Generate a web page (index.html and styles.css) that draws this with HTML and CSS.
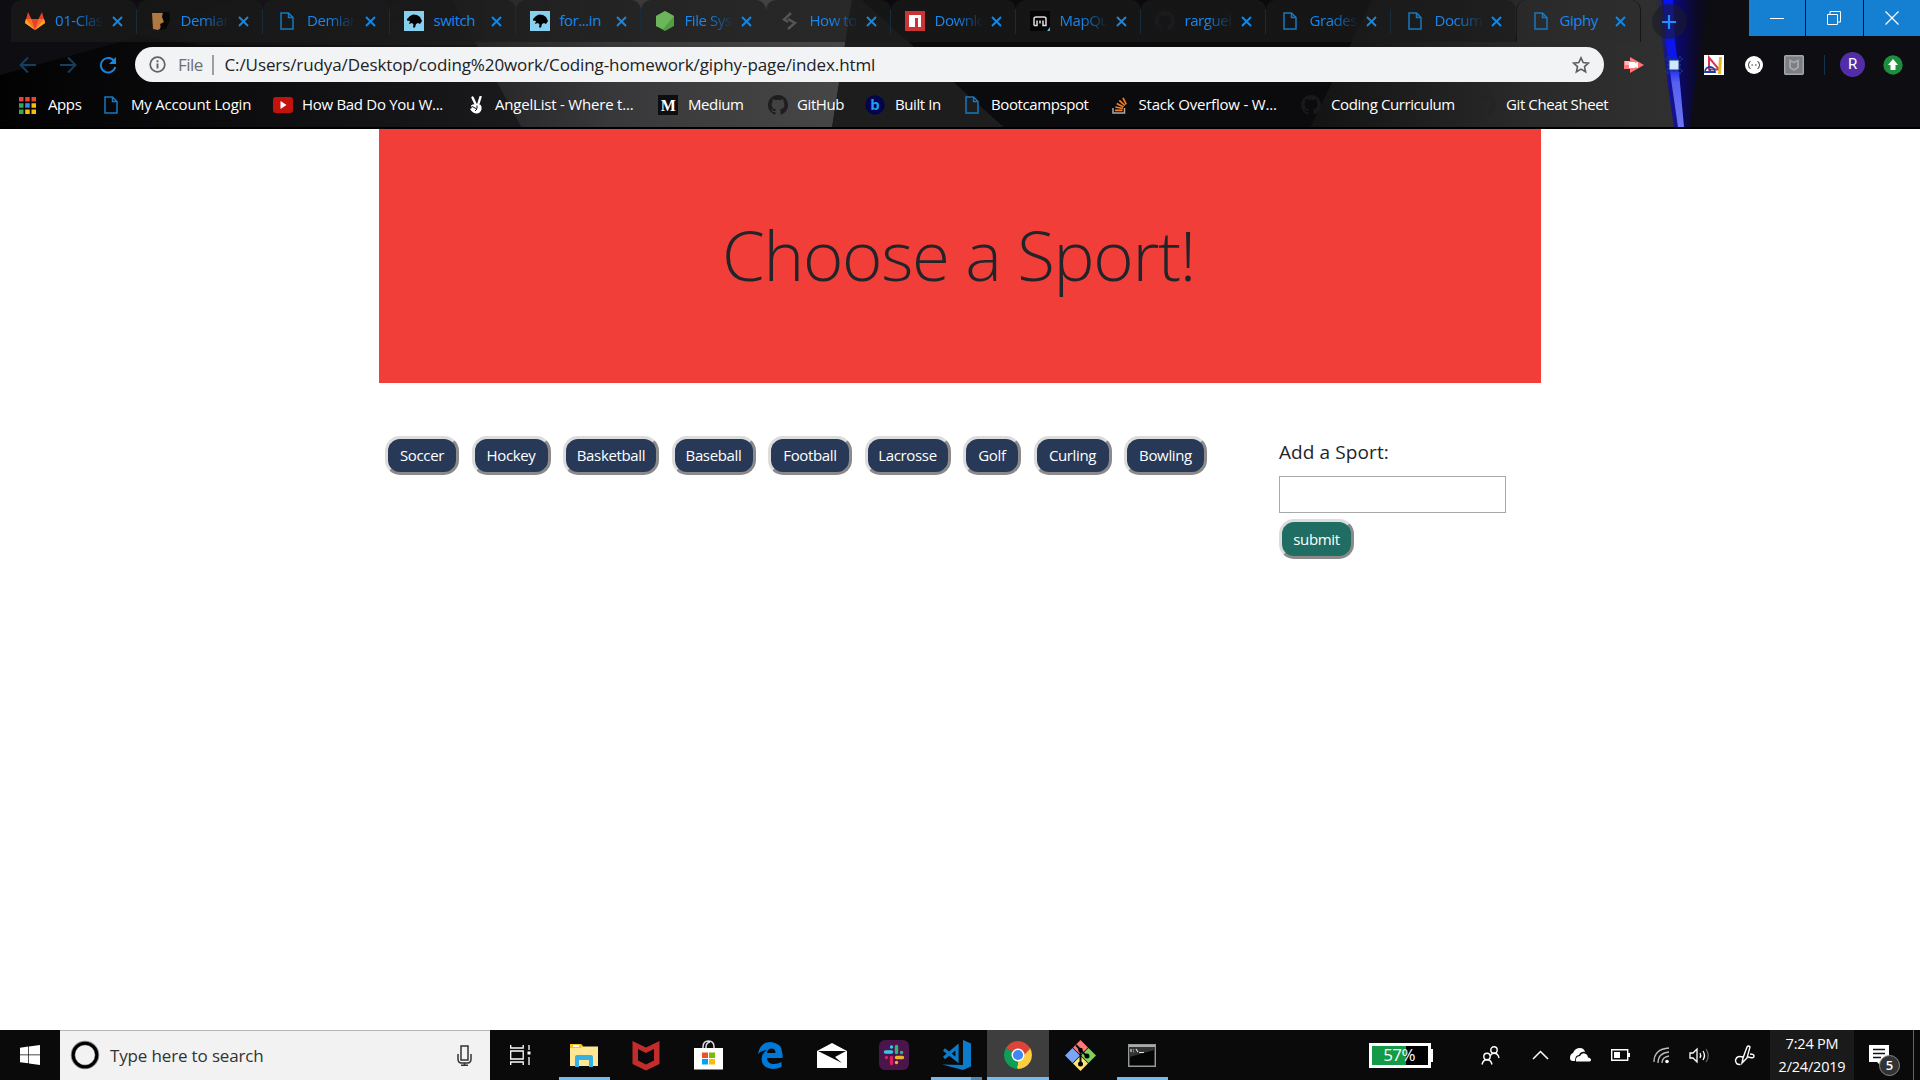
FILE: index.html
```html
<!DOCTYPE html>
<html lang="en">
<head>
<meta charset="utf-8">
<title>Giphy</title>
<link rel="stylesheet" href="styles.css">
</head>
<body>
<svg class="defs" width="0" height="0">
  <symbol id="doc" viewBox="0 0 14 18"><path d="M1 1h7.5L13 5.500V17H1zM8.500 1v4.500H13" fill="none" stroke="#1778c0" stroke-width="1.500"/></symbol>
  <symbol id="close" viewBox="0 0 11 11"><path d="M1 1l9 9M10 1l-9 9" stroke="#1787e0" stroke-width="1.900"/></symbol>
  <symbol id="github" viewBox="0 0 16 16"><path d="M8 0C3.580 0 0 3.580 0 8c0 3.540 2.290 6.530 5.470 7.590.4.070.55-.17.55-.38v-1.490c-2.230.48-2.690-.95-2.690-.95-.36-.92-.89-1.170-.89-1.170-.73-.5.050-.49.050-.49.8.060 1.230.83 1.230.83.72 1.220 1.870.87 2.330.67.070-.52.280-.87.510-1.070-1.780-.2-3.640-.89-3.640-3.950 0-.87.310-1.590.820-2.150-.08-.2-.36-1.020.080-2.120 0 0 .67-.21 2.200.820a7.600 7.600 0 0 1 4 0c1.530-1.040 2.200-.82 2.200-.82.44 1.100.16 1.920.080 2.120.51.560.82 1.270.82 2.150 0 3.070-1.870 3.750-3.650 3.950.290.250.540.730.540 1.480v2.190c0 .21.150.46.550.38A8 8 0 0 0 8 0z"/></symbol>
  <symbol id="mdn" viewBox="0 0 20 20"><path fill="#87cfee" d="M0 0h20v20H0z"/><path d="M3 8l3-3 3-1.500 4 .5 3 2 2 4-2 3-2-1-2 1-1 3.500H9l.500-3L8 12l-3 1 1-3-3-.500z"/></symbol>
</svg>

<header class="browser">
  <svg class="theme" width="1920" height="128" viewBox="0 0 1920 128">
    <defs>
      <linearGradient id="wedge" x1="0" x2="1"><stop offset="0" stop-color="#222224"/><stop offset=".4" stop-color="#38383a"/><stop offset="1" stop-color="#474747"/></linearGradient>
      <linearGradient id="right" x1="0" x2="1"><stop offset="0" stop-color="#131314"/><stop offset=".6" stop-color="#2a2a2a"/><stop offset="1" stop-color="#303030"/></linearGradient>
      <linearGradient id="glow" x1="0" x2="1"><stop offset="0" stop-color="#0a08b8" stop-opacity="0"/><stop offset=".25" stop-color="#0a08b8" stop-opacity=".8"/><stop offset=".5" stop-color="#0803a0" stop-opacity=".5"/><stop offset="1" stop-color="#050230" stop-opacity="0"/></linearGradient>
      <linearGradient id="beam" x1="0" x2="0" y1="0" y2="1"><stop offset="0" stop-color="#0712f5"/><stop offset=".5" stop-color="#0c18e8"/><stop offset=".65" stop-color="#5560f0"/><stop offset="1" stop-color="#6c75f5"/></linearGradient>
      <linearGradient id="left" x1="0" x2="1" y1="0" y2="0"><stop offset="0" stop-color="#020203"/><stop offset="1" stop-color="#1b1a1d"/></linearGradient>
      <linearGradient id="band" x1="0" x2="1" y1="0" y2="0"><stop offset="0" stop-color="#121115"/><stop offset="1" stop-color="#232325"/></linearGradient>
    </defs>
    <path fill="#0e0d11" d="M0 0h1920v128H0z"/>
    <path fill="url(#left)" d="M0 75L200 20H540v108H0z"/>
    <path fill="url(#band)" d="M130 34L240 0h240l12 45H200z" opacity=".6"/>
    <path fill="url(#wedge)" d="M452 0h400l-20 128H522z"/>
    <path fill="#1d1d1e" d="M852 0h10l143 128H832z"/>
    <path fill="#0b0a0d" d="M862 0h510l-62 128H1005z"/>
    <path fill="url(#right)" d="M1372 0h290l18 128H1310z"/>
    <path fill="url(#glow)" d="M1656 0h55l-12 60-10 68h-15z"/>
    <path fill="url(#beam)" d="M1663 0h10l2 42 4 30 5 55h-6l-8-55-4-30z"/>
    <path fill="#000" d="M0 127h1920v1H0z"/>
  </svg>

  <div class="tabstrip">
    <div class="tabs">
      <div class="tab"><svg class="fav" viewBox="0 0 20 20"><path fill="#e24329" d="M10 19L0 12 3 1l3.500 7h7L17 1l3 11z"/><path fill="#fc6d26" d="M10 19L0 12l1-4h5.500L10 19l3.500-11H19l1 4z"/><path fill="#fca326" d="M10 19L0 12l1-4zM10 19l10-7-1-4z"/></svg><span class="label">01-Class</span><svg class="x"><use href="#close"/></svg></div>
      <div class="tab"><svg class="fav" viewBox="0 0 20 20"><path fill="#b0793f" d="M1 2h13l-2 4 1 5-4 2 1 4-3 2-5-1z"/><path fill="#080808" d="M12 1h6l1 8-4 9-6 1 1-5 3-3-2-5z"/></svg><span class="label">Demian</span><svg class="x"><use href="#close"/></svg></div>
      <div class="tab"><svg class="fav"><use href="#doc"/></svg><span class="label">Demian</span><svg class="x"><use href="#close"/></svg></div>
      <div class="tab"><svg class="fav"><use href="#mdn"/></svg><span class="label whole">switch</span><svg class="x"><use href="#close"/></svg></div>
      <div class="tab"><svg class="fav"><use href="#mdn"/></svg><span class="label whole">for...in</span><svg class="x"><use href="#close"/></svg></div>
      <div class="tab"><svg class="fav" viewBox="0 0 20 20"><path fill="#539e43" d="M10 0l9 5v10l-9 5-9-5V5z"/><path fill="#7fc56a" d="M10 0l9 5-11 13-7-3V5z" opacity=".6"/></svg><span class="label">File Sys</span><svg class="x"><use href="#close"/></svg></div>
      <div class="tab"><svg class="fav" viewBox="0 0 20 20"><path fill="none" stroke="#555" stroke-width="2.400" d="M11 2L4 8.500l4 2.500M8 8l7 4-7 6"/></svg><span class="label">How to</span><svg class="x"><use href="#close"/></svg></div>
      <div class="tab"><svg class="fav" viewBox="0 0 20 20"><path fill="#cb3335" d="M0 0h20v20H0z"/><path fill="#fff" d="M4 4h12v12h-3V7h-3v9H4z"/></svg><span class="label">Downlo</span><svg class="x"><use href="#close"/></svg></div>
      <div class="tab"><svg class="fav" viewBox="0 0 20 20"><path fill="#050505" d="M0 0h20v20H0z"/><path fill="none" stroke="#ddd" stroke-width="1.500" d="M4 14.500V8q0-2 2-2h8q2 0 2 2v6.500h-3V9.500M7 9.500v5H4M10 9.500v3"/><path fill="#4bc3d8" d="M20 16v4h-3z"/></svg><span class="label">MapQu</span><svg class="x"><use href="#close"/></svg></div>
      <div class="tab"><svg class="fav" fill="#1c1a1e"><use href="#github"/></svg><span class="label">rarguel</span><svg class="x"><use href="#close"/></svg></div>
      <div class="tab"><svg class="fav"><use href="#doc"/></svg><span class="label">Grades</span><svg class="x"><use href="#close"/></svg></div>
      <div class="tab"><svg class="fav"><use href="#doc"/></svg><span class="label">Docum</span><svg class="x"><use href="#close"/></svg></div>
      <div class="tab active"><svg class="fav"><use href="#doc"/></svg><span class="label whole">Giphy</span><svg class="x"><use href="#close"/></svg></div>
    </div>
    <div class="newtab"><svg width="16" height="16" viewBox="0 0 16 16"><path d="M8 1v14M1 8h14" stroke="#1c90ff" stroke-width="2.200"/></svg></div>
    <div class="winctl">
      <span><svg width="14" height="14"><path d="M0 7.500h14" stroke="#fff"/></svg></span>
      <span><svg width="14" height="14" fill="none" stroke="#fff"><path d="M.5 3.500h10v10H.5zM3 3V.5h10.500V11H11"/></svg></span>
      <span><svg width="14" height="14"><path d="M.5.5l13 13M13.500.5l-13 13" stroke="#fff" stroke-width="1.200"/></svg></span>
    </div>
  </div>

  <div class="toolbar">
    <div class="nav">
      <svg viewBox="0 0 18 18" stroke="#153f60"><path d="M17 9H2M9 1.500L1.500 9 9 16.500"/></svg>
      <svg viewBox="0 0 18 18" stroke="#153f60"><path d="M1 9h15M9 1.500L16.500 9 9 16.500"/></svg>
      <svg viewBox="0 0 18 18" stroke="#1787e0"><path d="M15.500 5.500A7.300 7.300 0 1 0 16.300 11"/><path d="M17 1v7h-7z" fill="#1787e0" stroke="none"/></svg>
    </div>
    <div class="omnibox">
      <svg class="info" viewBox="0 0 17 17"><circle cx="8.500" cy="8.500" r="7.300" fill="none" stroke="#5f6368" stroke-width="1.700"/><path d="M8.500 7.500v5M8.500 4.300v1.900" stroke="#5f6368" stroke-width="1.900"/></svg>
      <span class="scheme">File</span><i></i>
      <span class="url">C:/Users/rudya/Desktop/coding%20work/Coding-homework/giphy-page/index.html</span>
      <svg class="star" viewBox="0 0 18 18"><path d="M9 1.800l2.200 4.800 5.200.5-3.900 3.500 1.100 5.200L9 13.100l-4.600 2.700 1.100-5.200L1.600 7.100l5.200-.5z" fill="none" stroke="#5a5e63" stroke-width="1.600"/></svg>
    </div>
    <div class="exts">
      <svg viewBox="0 0 20 20"><path fill="#f77" d="M0 6h6V2l14 8-14 8v-4H0z"/><path fill="#fff" d="M5 7h6v1l3-1v6l-3-1v1H5z"/><path fill="#fbb" d="M1 6h4v4H1z"/></svg>
      <svg viewBox="0 0 20 20"><path fill="none" stroke="#173b70" stroke-width="1.500" stroke-dasharray="2 2" d="M1 4h18M1 16h18M4 1v18M16 1v18"/><path fill="#d3e5ff" stroke="#123a80" d="M5 5h10v10H5z"/></svg>
      <svg viewBox="0 0 20 20"><path fill="#fff" d="M0 0h20v20H0z"/><path fill="none" stroke="#d43850" stroke-width="2" d="M5 2.500v12h10z"/><path stroke="#e5b62a" stroke-width="3" d="M16.500 2l-1 17"/><path fill="none" stroke="#1740a0" stroke-width="1.800" d="M1 17a5 5 0 0 1 10 0zM6 14v3"/></svg>
      <svg viewBox="0 0 20 20"><circle cx="10" cy="10" r="9" fill="#fff"/><path fill="none" stroke="#333" d="M6.500 6.500q-1.500 0-1.500 1.500t-1 2q1 .5 1 2t1.500 1.500M13.500 6.500q1.500 0 1.500 1.500t1 2q-1 .5-1 2t-1.500 1.500M7.500 10h1.500M11 10h1.500"/></svg>
      <svg viewBox="0 0 20 20"><rect x=".7" y=".7" width="18.600" height="18.600" rx="1" fill="#7b7f83" stroke="#a4a7aa" stroke-width="1.400"/><path fill="none" stroke="#a5a8aa" stroke-width="1.900" d="M6 5.500l4 2 4-2v7l-4 2.500-4-2.500z"/></svg>
      <i></i>
      <b>R</b>
      <svg viewBox="0 0 20 20"><circle cx="10" cy="10" r="9.700" fill="#1e8e3e"/><path fill="#fff" d="M10 4l5 6h-2.500v5h-5v-5H5z"/></svg>
    </div>
  </div>

  <nav class="bookmarks">
    <a class="b1"><svg viewBox="0 0 17 17"><path fill="#ea4335" d="M0 0h4.500v4.500H0zM6.200 0h4.500v4.500H6.200zM12.500 0H17v4.500h-4.500z"/><path fill="#34a853" d="M0 6.200h4.500v4.500H0zM0 12.500h4.500V17H0z"/><path fill="#4285f4" d="M6.200 6.200h4.500v4.500H6.200z"/><path fill="#fbbc05" d="M12.500 6.200H17v4.500h-4.500zM6.200 12.500h4.500V17H6.200zM12.500 12.500H17V17h-4.500z"/></svg><span>Apps</span></a>
    <a class="b2"><svg><use href="#doc"/></svg><span>My Account Login</span></a>
    <a class="b3"><svg viewBox="0 0 20 16"><rect width="20" height="16" rx="3" fill="#c4120c"/><path fill="#fff" d="M7.500 4l6 4-6 4z"/></svg><span>How Bad Do You W...</span></a>
    <a class="b4"><svg viewBox="0 0 14 18"><path d="M3.500 1.500L7 9M11.500 1L9 9" stroke="#fff" stroke-width="2.400" stroke-linecap="round"/><path fill="#fff" d="M2 9.500Q5 7.500 7 9l4-.5q2 1 1.500 5Q11 18 7 17.500 3.500 17 1 13l2-1z"/><path d="M3 10.500l5 2.500-2 2M8 9.500v3" fill="none" stroke="#111"/></svg><span>AngelList - Where t...</span></a>
    <a class="b5"><svg viewBox="0 0 20 20"><path fill="#0e0e0e" d="M0 0h20v20H0z"/><text x="10" y="15.500" text-anchor="middle" class="serif-m">M</text></svg><span>Medium</span></a>
    <a class="b6"><svg fill="#1f1d20"><use href="#github"/></svg><span>GitHub</span></a>
    <a class="b7"><svg viewBox="0 0 20 20"><circle cx="10" cy="10" r="9.700" fill="#03034e"/><text x="10" y="15.300" text-anchor="middle" class="sans-b">b</text></svg><span>Built In</span></a>
    <a class="b8"><svg><use href="#doc"/></svg><span>Bootcampspot</span></a>
    <a class="b9"><svg viewBox="0 0 15 17"><path fill="none" stroke="#aaa" stroke-width="1.500" d="M1 11v5h11.500v-5"/><path stroke="#f48024" stroke-width="1.700" d="M3 13.300h7.500M3.300 10l7.500 1.500M4.700 6.500l6.800 3.400M7.300 3.300l5.500 5.200M11 .8l3.200 6.500"/></svg><span>Stack Overflow - W...</span></a>
    <a class="b10"><svg fill="#1a181b"><use href="#github"/></svg><span>Coding Curriculum</span></a>
    <a class="b11"><svg fill="#252324"><use href="#github"/></svg><span>Git Cheat Sheet</span></a>
  </nav>
</header>

<main class="page">
  <section class="hero"><h1>Choose a Sport!</h1></section>
  <section class="content">
    <div class="sports">
      <button class="w74">Soccer</button><button class="w79">Hockey</button><button class="w96">Basketball</button><button class="w84">Baseball</button><button class="w84">Football</button><button class="w86">Lacrosse</button><button class="w58">Golf</button><button class="w78">Curling</button><button class="w83">Bowling</button>
    </div>
    <form class="add">
      <label for="sport">Add a Sport:</label>
      <input id="sport" type="text">
      <button type="button" class="submit">submit</button>
    </form>
  </section>
</main>

<footer class="taskbar">
  <div class="start"><svg width="20" height="20" viewBox="0 0 20 20" fill="#fff"><path d="M0 2.800L8.300 1.600v8H0zM9 1.500L20 0v9.600H9zM0 10.300h8.300v8L0 17.200zM9 10.300h11V20L9 18.500z"/></svg></div>
  <div class="search">
    <svg width="30" height="30" viewBox="0 0 30 30"><circle cx="15" cy="15" r="12" fill="none" stroke="#888" stroke-width="4.500"/><circle cx="15" cy="15" r="11.800" fill="none" stroke="#000" stroke-width="3"/></svg>
    <span>Type here to search</span>
    <svg class="mic" width="15" height="21" viewBox="0 0 15 21" fill="none" stroke="#333" stroke-width="1.500"><path d="M4 1h7v14H4zM1 9v5q0 4 3.500 4h6q3.500 0 3.500-4V9M7.500 18v2M4 20.200h7"/></svg>
  </div>
  <div class="apps">
    <div class="app taskview"><svg width="21" height="20" viewBox="0 0 21 20" fill="none" stroke="#fff" stroke-width="1.300"><path d="M.7 0v3h12.500V0M.7 6h12.500v8H.7zM.7 20v-3h12.500v3M19 0v5M19 12v8"/><path d="M17.500 6.500h3v3h-3z" fill="#fff" stroke="none"/></svg></div>
    <div class="app open"><svg width="28" height="24" viewBox="0 0 28 24"><path fill="#f8c31c" d="M0 1h11l2 3H0z"/><path fill="#ffe793" d="M0 3.500h28V23H0z"/><path fill="#f8c31c" d="M0 1h11l2 2-2 2H0z"/><path fill="#fff" d="M3 2h6v2H3z"/><path fill="#36b1e3" d="M5 14q0-2 2-2h14q2 0 2 2v10h-4v-7H9v7H5z"/></svg></div>
    <div class="app"><svg width="28" height="31" viewBox="0 0 28 31"><path fill="#c22d2c" fill-rule="evenodd" d="M.5 1L14 7.500 27.500 1v23L14 30.500.5 24zM6 9v11.500l8 4 8-4V9l-8 4z"/></svg></div>
    <div class="app"><svg width="29" height="30" viewBox="0 0 29 30"><path fill="none" stroke="#ddd" stroke-width="1.500" d="M9 9V7q0-6 5.500-6T20 7v2M12 9V7q0-4 4-5"/><path fill="#fff" d="M0 8h29v21.500H0z"/><path fill="#f25022" d="M8 12.500h6v5.500H8z"/><path fill="#7fba00" d="M15 12.500h6v5.500h-6z"/><path fill="#00a4ef" d="M8 19h6v5.500H8z"/><path fill="#ffb900" d="M15 19h6v5.500h-6z"/></svg></div>
    <div class="app"><svg width="25" height="27" viewBox="0 0 25 27"><path fill="#0078d7" d="M0 12Q2 0 13 0q11 1 11.500 12v4H9q.5 6 7 6 4 0 7.500-2v5q-4 2-9 2Q4 26 3.500 17q0-6 5.500-9Q3 8.500 0 12zM9 11h8.500q0-4.500-4-4.500T9 11z"/></svg></div>
    <div class="app"><svg width="30" height="25" viewBox="0 0 30 25"><path fill="#fff" d="M0 8L15 0l15 8v17H0z"/><path fill="#0a0a0a" d="M1 8h28L18 14l7 6z"/></svg></div>
    <div class="app"><svg width="30" height="30" viewBox="0 0 30 30"><rect width="30" height="30" rx="6" fill="#4a154b"/><g stroke-width="3.400" stroke-linecap="round"><path stroke="#36c5f0" d="M12.500 7v.1M12.500 12H6.500"/><path stroke="#2eb67d" d="M17.500 6.500v6M22.500 12.500h.1"/><path stroke="#ecb22e" d="M17.500 17.500h6M17.500 22.500v.1"/><path stroke="#e01e5a" d="M12.500 17.500v6M7.500 17.500h-.1"/></g></svg></div>
    <div class="app multi"><svg width="29" height="30" viewBox="0 0 29 30"><path fill="#0b7ccb" d="M21 0l8 3.500v23L21 30 0 24.500l21 .5z"/><path fill="none" stroke="#0b7ccb" stroke-width="3.200" d="M2 9.500L15 20V7L2 18"/></svg></div>
    <div class="app open current"><svg width="28" height="28" viewBox="0 0 28 28"><path fill="#db4437" d="M14 14L1.900 7a14 14 0 0 1 24.200 0z"/><path fill="#0f9d58" d="M14 14L14 28A14 14 0 0 1 1.900 7z"/><path fill="#ffcd40" d="M14 14L26.100 7A14 14 0 0 1 14 28z"/><path fill="#db4437" d="M14 7.500h12.500L20 14z"/><path fill="#0f9d58" d="M2 7l6.500 11 6 3-3.500 6.500z"/><path fill="#ffcd40" d="M20 13l-6 15-1-2 4-8z"/><circle cx="14" cy="14" r="6.500" fill="#fff"/><circle cx="14" cy="14" r="5.100" fill="#4285f4"/></svg></div>
    <div class="app"><svg width="31" height="31" viewBox="0 0 31 31"><path fill="#f77" d="M15.500 0l7.500 7.500-7.500 7.500L8 7.500z"/><path fill="#7aa7f5" d="M7.500 8l7.500 7.500L7.500 23 0 15.500z"/><path fill="#80d25b" d="M23.500 8l7.500 7.500-7.500 7.500-7.500-7.500z"/><path fill="#ffe47a" d="M15.500 16l7.500 7.500-7.500 7.500L8 23.500z"/><path fill="none" stroke="#111" stroke-width="2" d="M11 5l4.500 5v14M15.500 10l6 6"/><circle cx="15.500" cy="10" r="2.300"/><circle cx="15.500" cy="24" r="2.500"/><circle cx="22" cy="16" r="2.500"/></svg></div>
    <div class="app open"><svg width="28" height="23" viewBox="0 0 28 23"><path fill="#050505" stroke="#929a9e" stroke-width="1.500" d="M.7.700h26.600v21.600H.7z"/><path fill="#aaa" d="M1 1h26v2H1z"/><path fill="#333" d="M1.500 3h25v3L1.500 13z"/><path stroke="#ddd" stroke-width="1.200" d="M3 5v3M5.500 5.500v.8M5.500 7.500v.8M8 5l2 3M11 8.500h5"/></svg></div>
  </div>
  <div class="tray">
    <div class="battery"><span>57%</span></div>
    <svg class="people" width="19" height="19" viewBox="0 0 19 19" fill="none" stroke="#fff" stroke-width="1.400"><circle cx="13" cy="4" r="3.200"/><path d="M9 10q1.500-2.700 4-2.700 4 0 5 4.700"/><circle cx="6" cy="10.500" r="3.200"/><path d="M1 18.500q1-4.800 5-4.800t5 4.800"/></svg>
    <svg class="chev" width="17" height="10" viewBox="0 0 17 10" fill="none" stroke="#fff" stroke-width="1.500"><path d="M1 9l7.500-7.500L16 9"/></svg>
    <svg class="cloud" width="21" height="14" viewBox="0 0 21 14" fill="#fff"><path d="M0 10Q0 6 3 5 5 0 10 0q4 0 5 4-4-1-6 3-4 0-4 6H3q-3 0-3-3z"/><path d="M6 13.500q-1-5 4-5.500 2-4 6-2 2 1 2 3.500 3 .5 3 2.500 0 1.500-2 1.500z"/></svg>
    <svg class="batt" width="19" height="12" viewBox="0 0 19 12"><path d="M.7.700h16v10.600H.7z" fill="none" stroke="#fff" stroke-width="1.400"/><path d="M3 3h6v6H3zM17 4h2v4h-2z" fill="#fff"/></svg>
    <svg class="wifi" width="17" height="18" viewBox="0 0 17 18" fill="none" stroke="#bbb" stroke-width="1.300"><path d="M1 16Q1 3 16 2M5 17Q5 7 16 6M9 17q0-6 7-7"/><circle cx="14" cy="15.500" r="1.800" fill="#fff" stroke="none"/></svg>
    <svg class="vol" width="21" height="17" viewBox="0 0 21 17" fill="none" stroke="#fff" stroke-width="1.300"><path d="M1 6h3l4-4v13l-4-4H1zM11 6q1.500 2.500 0 5M14 4q3 4.500 0 9"/><path stroke="#666" d="M17 2q4.500 6.500 0 13"/></svg>
    <svg class="pen" width="21" height="21" viewBox="0 0 21 21" fill="none" stroke="#fff" stroke-width="1.400"><path d="M8 18l1-5 4-11q1.500-2 3 0l-3 11zM9 12Q3 10 1.500 15q0 5 5 4.500M14 12q6 2 6-1 0-2-4-2"/></svg>
    <div class="clock"><span>7:24 PM</span><span>2/24/2019</span></div>
    <div class="notif"><svg width="20" height="21" viewBox="0 0 20 21"><path fill="#fff" d="M0 0h20v17h-8v4l-4-4H0z"/><path stroke="#111" stroke-width="1.400" d="M4 4.500h12M4 8.500h12M4 12.500h8"/></svg><b>5</b></div>
  </div>
</footer>
</body>
</html>
```
FILE: styles.css
```css
* { box-sizing: border-box; }
body {
  margin: 0;
  width: 1920px;
  height: 1080px;
  overflow: hidden;
  display: flex;
  flex-direction: column;
  background: #fff;
  font-family: "Open Sans", "Noto Sans", sans-serif;
  color: #212529;
}
svg { display: block; flex: none; }
.defs { position: absolute; }

/* browser frame */
.browser { position: relative; height: 129px; flex: none; display: flex; flex-direction: column; background: #000; isolation: isolate; }
.theme { position: absolute; top: 0; left: 0; z-index: -1; }
.tabstrip { display: flex; height: 42px; padding-left: 11px; }
.tabs { display: grid; grid-template-columns: 125.500px 126.500px 126.500px 126px repeat(9, 125px); height: 42px; }
.tab {
  display: flex;
  align-items: center;
  padding: 0 14px;
  border-radius: 10px 10px 0 0;
  background: linear-gradient(90deg, #1b1b1bb0, #1b1b1bb0) 0 0 no-repeat, linear-gradient(#12507f, #12507f) 100% 9px / 1px 25px no-repeat;
}
.tab.active { background: #2d2d2d40; border-left: 1px solid #161616; border-right: 1px solid #161616; }
.fav { width: 20px; height: 20px; }
.tab:nth-child(3) .fav, .tab:nth-child(n+11) .fav { height: 18px; }
.label {
  width: 47px;
  height: 42px;
  line-height: 40px;
  margin-left: 10px;
  white-space: nowrap;
  font-size: 15px;
  letter-spacing: -.45px;
  color: #1787f0;
  -webkit-mask-image: linear-gradient(90deg, #000 45%, #0001);
}
.label.whole { -webkit-mask-image: none; }
.tab.active .label { margin-left: 9px; }
.x { width: 11px; height: 11px; margin-left: auto; }
.newtab { width: 35px; height: 35px; margin: 4px 0 0 11px; border-radius: 50%; background: #1a1a2499; display: flex; align-items: center; justify-content: center; }
.winctl { display: flex; gap: 1px; margin-left: auto; height: 36px; }
.winctl span { width: 56.500px; background: #1580d2; display: flex; align-items: center; justify-content: center; }

.toolbar { display: flex; align-items: center; height: 45px; }
.nav { display: flex; width: 135px; padding-left: 19px; gap: 22px; }
.nav svg { width: 18px; height: 18px; fill: none; stroke-width: 1.900; }
.omnibox { display: flex; align-items: center; width: 1469px; height: 35px; padding: 0 14px; border-radius: 18px; background: #f1f3f4; font-size: 17px; line-height: 33px; }
.info { width: 17px; height: 17px; }
.scheme { width: 34px; margin-left: 12px; color: #6a6e73; letter-spacing: -.5px; }
.omnibox i { width: 1.500px; height: 20px; background: #9aa0a6; }
.url { margin-left: 11px; letter-spacing: -.1px; white-space: nowrap; color: #202124; }
.star { width: 18px; height: 18px; margin-left: auto; }
.exts { display: flex; align-items: center; gap: 20px; margin-left: 20px; }
.exts svg { width: 20px; height: 20px; }
.exts i { width: 1px; height: 20px; background: #12324d; }
.exts b { width: 25px; height: 25px; margin: 0 -2px 0 -5px; border-radius: 50%; background: #512da8; color: #fff; font: 15px/25px Roboto, sans-serif; text-align: center; }

.bookmarks { display: grid; grid-template-columns: 85px 169px 196px 189px 110px 97px 100px 147px 189px 175px auto; height: 36px; padding-left: 19px; color: #fff; font-size: 15px; letter-spacing: -.4px; white-space: nowrap; }
.bookmarks a { display: flex; align-items: center; gap: 10px; }
.bookmarks span { padding-bottom: 2px; }
.bookmarks .b2 { letter-spacing: -.2px; }
.bookmarks .b3 { letter-spacing: -.3px; }
.bookmarks .b4 { letter-spacing: -.2px; }
.bookmarks .b9 { letter-spacing: -.2px; }
.bookmarks svg { width: 20px; height: 20px; }
.bookmarks .b1 svg { width: 17px; height: 17px; margin-right: 2px; }
.bookmarks .b2 svg, .bookmarks .b8 svg { width: 14px; height: 18px; margin-right: 3px; }
.bookmarks .b8 svg { margin-right: 2px; }
.bookmarks .b3 svg { height: 16px; margin-right: -1px; }
.bookmarks .b4 svg { width: 14px; height: 18px; margin-right: 2px; }
.bookmarks .b6 svg { margin-right: -1px; }
.bookmarks .b9 svg { width: 15px; height: 17px; margin-right: 1.500px; }
.serif-m { font: bold 16px "Liberation Serif", serif; fill: #fff; }
.sans-b { font: bold 15px "Open Sans", sans-serif; fill: #1f9cf0; letter-spacing: 0; }

/* page */
.page { flex: 1; display: flex; flex-direction: column; align-items: center; }
.hero { width: 1162px; height: 254px; display: flex; align-items: center; justify-content: center; padding: 0 3px 5px 0; background: #f23e38; }
h1 { margin: 0; font-size: 69px; font-weight: 300; line-height: 84px; letter-spacing: -1.300px; white-space: nowrap; }
.content { width: 1162px; display: flex; justify-content: space-between; padding: 53px 35px 0 6px; }
.sports { display: flex; gap: 12.500px; }
button {
  height: 39px;
  padding: 0 0 2px;
  border: 3px solid;
  border-color: #dcdcdc #8b8989 #8b8989 #dcdcdc;
  border-radius: 15px;
  background: #283958;
  color: #fff;
  font: 15px "Open Sans", sans-serif;
  letter-spacing: -.35px;
}
.w74 { width: 74px; } .w79 { width: 79px; } .w96 { width: 96px; } .w84 { width: 84px; } .w86 { width: 86px; }
.w58 { width: 58px; } .w78 { width: 78px; } .w83 { width: 83px; }
.add { display: flex; flex-direction: column; align-items: flex-start; width: 227px; }
.add label { height: 40px; line-height: 32px; font-size: 19px; letter-spacing: .1px; }
.add input { width: 227px; height: 37px; border: 1px solid #a9a9a9; background: #fff; }
.submit { width: 75px; height: 40px; margin-top: 6px; padding-bottom: 0; background: #206e63; }

/* taskbar */
.taskbar { display: flex; height: 50px; flex: none; background: #0a0a0a; color: #fff; }
.start { width: 60px; display: flex; align-items: center; justify-content: center; }
.search { width: 430px; display: flex; align-items: center; padding: 0 18px 0 10px; gap: 10px; background: #f2f2f2; border-top: 1px solid #b5b5b5; color: #333; font-size: 17px; letter-spacing: -.15px; }
.search svg { margin-bottom: 1px; }
.search span { padding-bottom: 1px; }
.mic { margin-left: auto; }
.apps { display: flex; }
.app { width: 62px; display: flex; align-items: center; justify-content: center; background: linear-gradient(#76b9ed, #76b9ed) 50% 100% / 0 3px no-repeat; }
.taskview { width: 63px; padding-right: 3px; }
.app.open { background-size: 51px 3px; }
.app.multi { background: linear-gradient(90deg, #76b9ed 40px, #5487b0 40px) 50% 100% / 51px 3px no-repeat; }
.app.current { background: linear-gradient(#76b9ed, #76b9ed) 0 100% / 100% 3px no-repeat, #3e3e3e; }
.tray { display: flex; align-items: center; margin-left: auto; }
.battery { position: relative; width: 62px; height: 25px; border: 3px solid #fff; background: linear-gradient(90deg, #149b48 34px, #000 34px); display: flex; align-items: center; justify-content: center; padding-right: 2px; font-size: 17px; line-height: 17px; letter-spacing: -.6px; }
.battery span { padding-bottom: 2px; }
.battery::after { content: ""; position: absolute; left: 59px; top: 3px; width: 2px; height: 13px; background: #fff; }
.people { margin-left: 50px; }
.chev { margin-left: 32px; }
.cloud { margin-left: 21px; }
.batt { margin-left: 20px; }
.wifi { margin-left: 23px; }
.vol { margin-left: 19px; }
.pen { margin-left: 24px; }
.clock { width: 84px; height: 50px; margin-left: 15px; padding-top: 2px; background: #1a1a1a; display: flex; flex-direction: column; align-items: center; font-size: 14.500px; line-height: 23px; letter-spacing: -.2px; }
.notif { position: relative; width: 60px; height: 50px; margin-right: 6px; padding: 15px 0 0 15px; border-right: 1px solid #666; }
.notif b { position: absolute; left: 25px; top: 25px; width: 21px; height: 21px; border: 1px solid #888; border-radius: 50%; background: #333; font: 600 13px/19px "Open Sans", sans-serif; text-align: center; }
```
